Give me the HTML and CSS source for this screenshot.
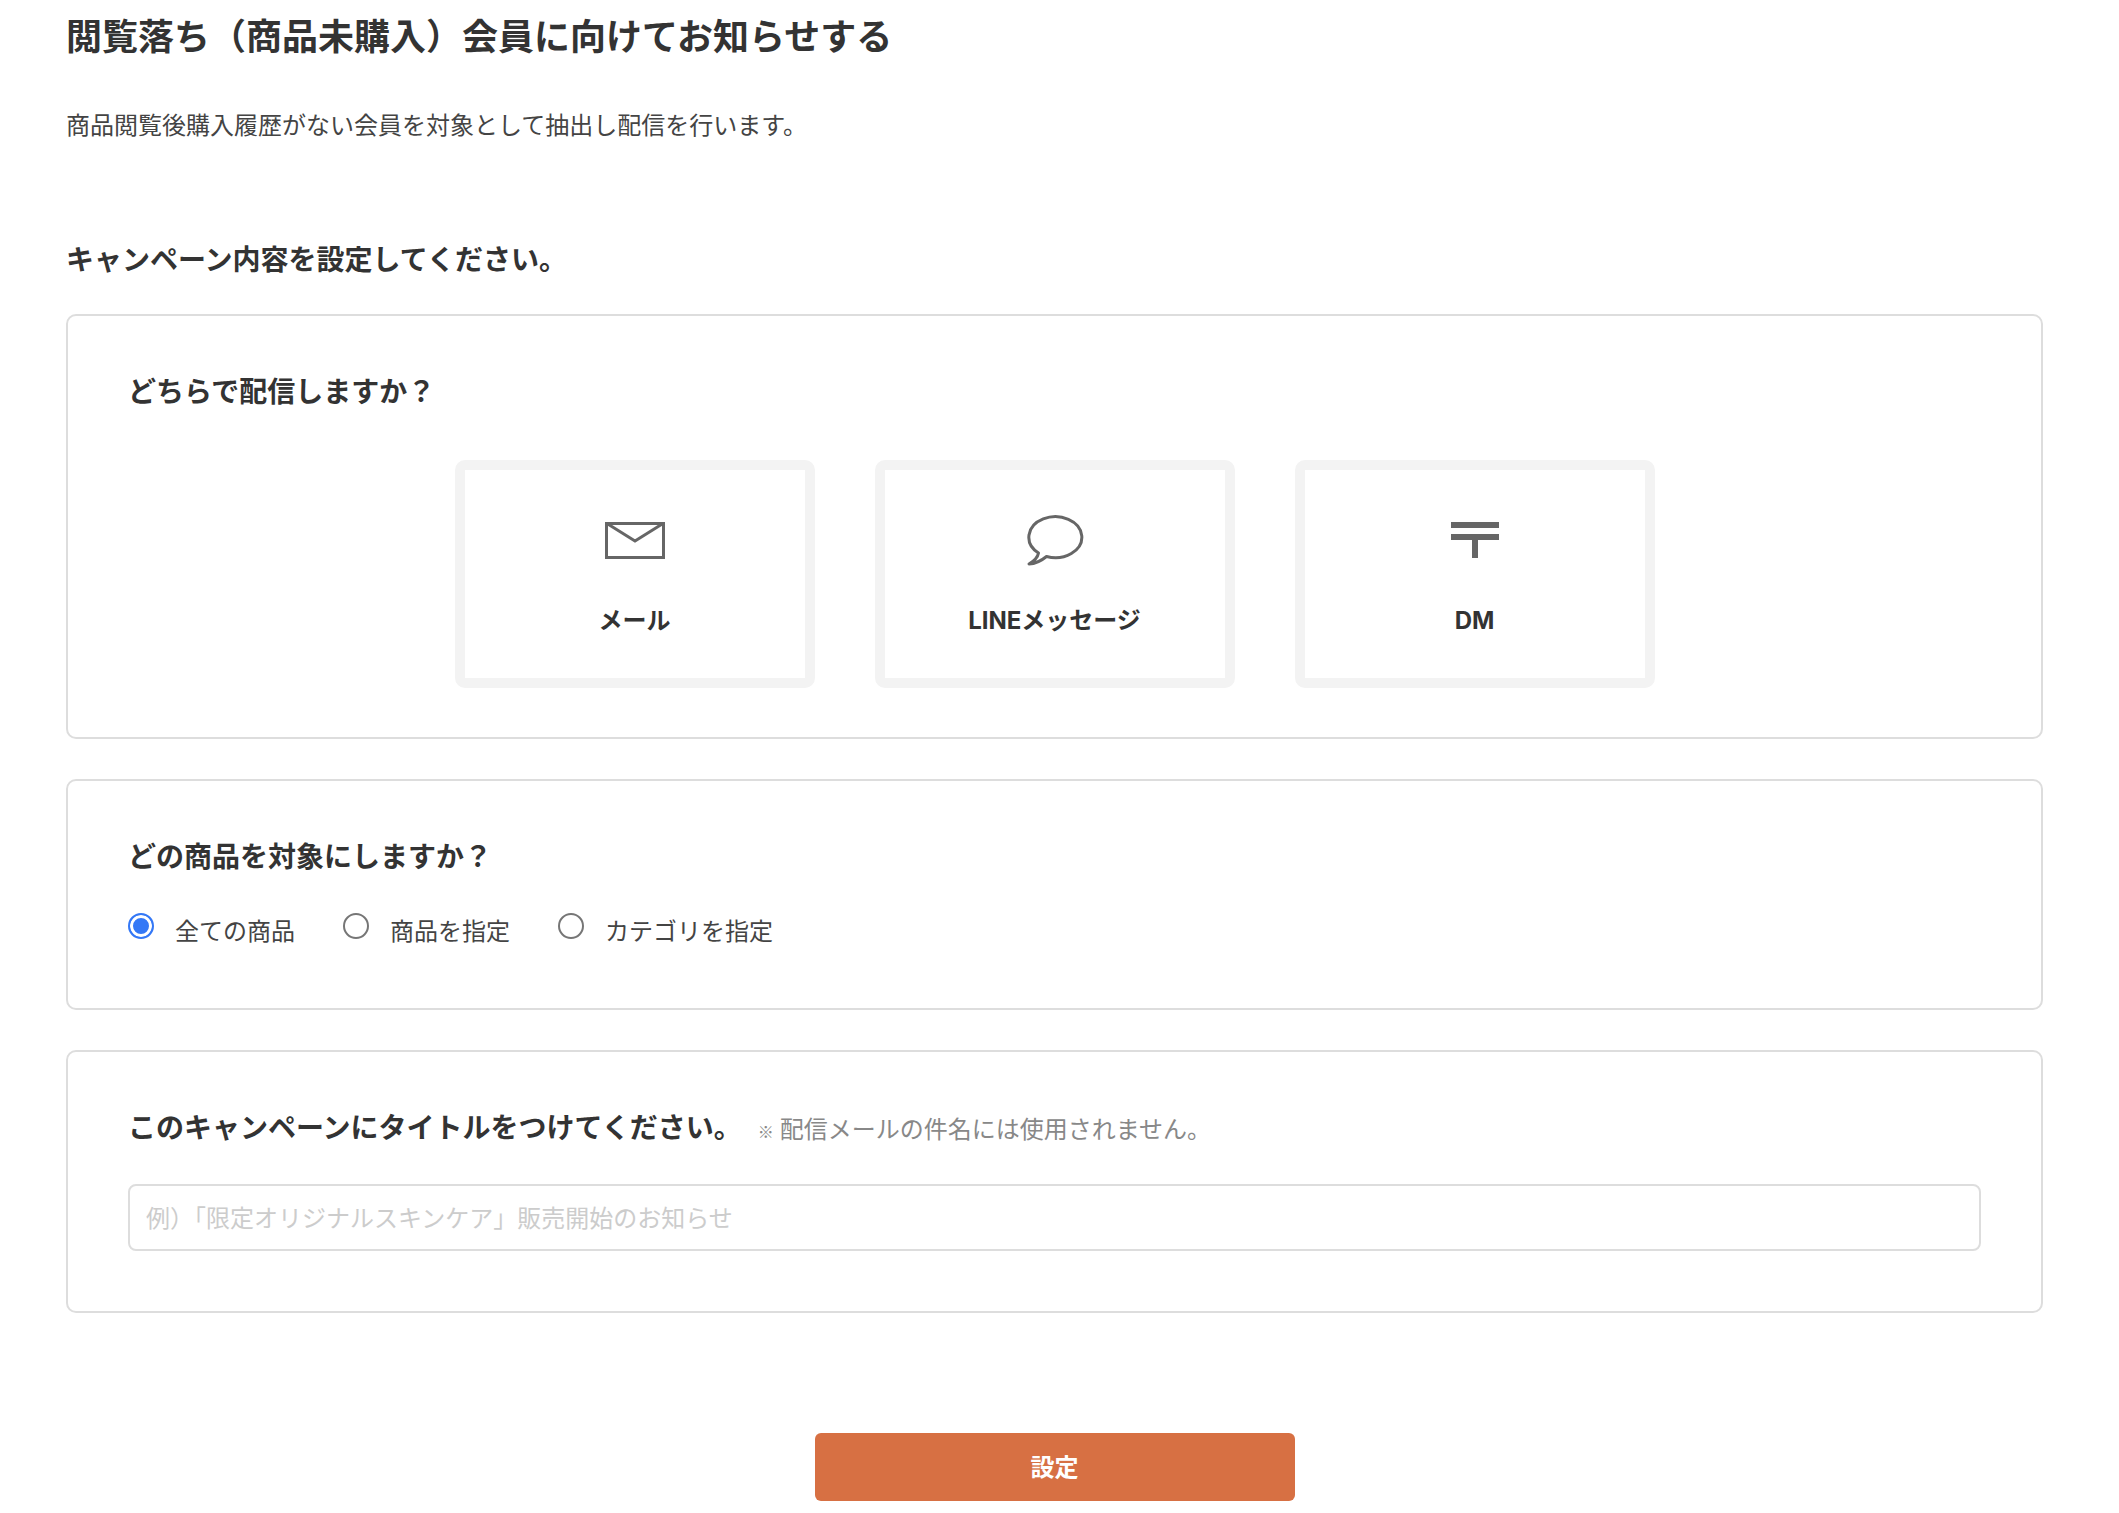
FILE: index.html
```html
<!DOCTYPE html>
<html lang="ja">
<head>
    <meta charset="UTF-8">
    <meta name="viewport" content="width=device-width, initial-scale=1.0">
    <title>閲覧落ち（商品未購入）会員に向けてお知らせする</title>
    <link rel="stylesheet" href="styles.css">
</head>
<body>
    <main class="page">
        <h1 class="page-title">閲覧落ち（商品未購入）会員に向けてお知らせする</h1>
        <p class="description">商品閲覧後購入履歴がない会員を対象として抽出し配信を行います。</p>

        <form class="campaign-form">
            <h2 class="lead">キャンペーン内容を設定してください。</h2>

            <section class="panel panel-channel">
                <h3 class="panel-title">どちらで配信しますか？</h3>
                <div class="channels">
                    <button type="button" class="channel">
                        <svg class="channel-icon" viewBox="0 0 60 52" aria-hidden="true">
                            <path d="M1.5 8.5h57v34h-57zM2 8.5l28 17.5 28-17.5"/>
                        </svg>
                        <span>メール</span>
                    </button>
                    <button type="button" class="channel">
                        <svg class="channel-icon" viewBox="0 0 60 52" aria-hidden="true">
                            <path stroke-linejoin="round" d="M13.5 38A26.5 20.5 0 1 1 21.500 41.500Q13 48.500 4 49Q12.500 44 13.500 38Z"/>
                        </svg>
                        <span>LINEメッセージ</span>
                    </button>
                    <button type="button" class="channel">
                        <svg class="channel-icon" viewBox="0 0 60 52" aria-hidden="true">
                            <path stroke-width="6" d="M6 10h48M6 22h48M30 22v21"/>
                        </svg>
                        <span>DM</span>
                    </button>
                </div>
            </section>

            <section class="panel">
                <h3 class="panel-title">どの商品を対象にしますか？</h3>
                <div class="radios">
                    <label class="radio"><input type="radio" name="target" value="all" checked>全ての商品</label>
                    <label class="radio"><input type="radio" name="target" value="item">商品を指定</label>
                    <label class="radio"><input type="radio" name="target" value="category">カテゴリを指定</label>
                </div>
            </section>

            <section class="panel">
                <div class="title-row">
                    <h3 class="panel-title"><label for="campaignTitle">このキャンペーンにタイトルをつけてください。</label></h3>
                    <p class="note"><span class="note-mark">※</span>配信メールの件名には使用されません。</p>
                </div>
                <input type="text" id="campaignTitle" class="text-input" placeholder="例）「限定オリジナルスキンケア」販売開始のお知らせ">
            </section>

            <button type="submit" class="submit">設定</button>
        </form>
    </main>
</body>
</html>
```
FILE: styles.css
```css
* {
    box-sizing: border-box;
}
body {
    margin: 0;
    background: #fff;
    color: #333;
    font-family: "Noto Sans CJK JP", sans-serif;
    font-size: 24px;
    line-height: 36px;
}
h1, h2, h3, p {
    margin: 0;
}
button, input {
    font-family: inherit;
    font-size: inherit;
    color: inherit;
}
.page {
    padding: 10px 76px 12px 66px;
}
.page-title {
    font-size: 36px;
    line-height: 48px;
}
.description {
    margin-top: 48px;
    color: #444;
}
.lead {
    margin: 98px 0 38px;
    font-size: 28px;
}
.panel {
    margin-bottom: 40px;
    padding: 58px 60px 60px;
    border: 2px solid #ddd;
    border-radius: 10px;
}
.panel-channel {
    padding-bottom: 49px;
}
.panel-title {
    font-size: 28px;
    line-height: 32px;
}

/* delivery channels */
.channels {
    display: flex;
    flex-wrap: wrap;
    justify-content: center;
    gap: 60px;
    margin-top: 54px;
}
.channel {
    display: flex;
    flex-direction: column;
    align-items: center;
    gap: 36px;
    width: 360px;
    padding: 45px 20px 39px;
    border: 10px solid #f3f3f3;
    border-radius: 10px;
    background: #fff;
    font-family: Inter, "Noto Sans CJK JP", sans-serif;
    font-weight: bold;
    line-height: 36px;
    cursor: pointer;
}
.channel-icon {
    width: 60px;
    height: 52px;
    fill: none;
    stroke: #666;
    stroke-width: 3;
}

/* target items */
.radios {
    display: flex;
    flex-wrap: wrap;
    gap: 48px;
    margin-top: 41px;
}
.radio {
    display: flex;
    align-items: flex-start;
    color: #444;
}
.radio input {
    appearance: none;
    width: 26px;
    height: 26px;
    margin: 1px 21px 0 0;
    border: 2px solid #767676;
    border-radius: 50%;
    background: #fff;
}
.radio input:checked {
    border-color: #3478f6;
    background: #3478f6;
    box-shadow: inset 0 0 0 3px #fff;
}

/* campaign title */
.title-row {
    display: flex;
    align-items: baseline;
    gap: 16px;
}
.note {
    color: #888;
    line-height: 32px;
}
.note-mark {
    margin-right: 6px;
    font-size: 16px;
}
.text-input {
    display: block;
    width: 100%;
    height: 67px;
    margin-top: 37px;
    padding: 0 16px 2px;
    border: 2px solid #ddd;
    border-radius: 8px;
    background: #fff;
}
.text-input::placeholder {
    color: #ccc;
}
.submit {
    display: block;
    width: 480px;
    max-width: 100%;
    height: 68px;
    margin: 120px auto 0;
    padding: 0 0 4px;
    border: none;
    border-radius: 6px;
    background: #d77043;
    color: #fff;
    font-weight: bold;
    cursor: pointer;
}
```
